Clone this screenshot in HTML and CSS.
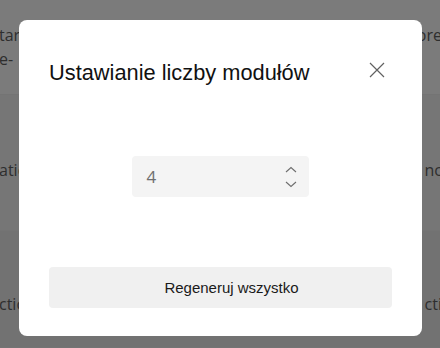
FILE: index.html
```
<!DOCTYPE html>
<html>
<head>
<meta charset="utf-8">
<link rel="stylesheet" href="styles.css">
</head>
<body>
<div class="page">
  <div class="row row-top">
    <div class="cell left"><div>tar</div><div>e-</div></div>
    <div class="cell right"><div>ore</div></div>
  </div>
  <div class="row row-mid">
    <div class="cell left">atio</div>
    <div class="cell right">nc</div>
  </div>
  <div class="row row-bot">
    <div class="cell left">ctio</div>
    <div class="cell right">cti</div>
  </div>
</div>
<div class="overlay">
  <div class="dialog">
    <div class="header">
      <h1 class="title">Ustawianie liczby modułów</h1>
      <button class="close" aria-label="Zamknij">
        <svg width="16" height="16" viewBox="0 0 16 16"><path d="M1 1 L15 15 M15 1 L1 15" stroke="#616161" stroke-width="1.2" fill="none"/></svg>
      </button>
    </div>
    <div class="body">
      <div class="spin">
        <span class="value">4</span>
        <div class="arrows">
          <svg width="12" height="8" viewBox="0 0 12 8"><path d="M1 6 L6 1.5 L11 6" stroke="#6e6e6e" stroke-width="1.1" fill="none"/></svg>
          <svg width="12" height="8" viewBox="0 0 12 8"><path d="M1 2 L6 6.5 L11 2" stroke="#6e6e6e" stroke-width="1.1" fill="none"/></svg>
        </div>
      </div>
    </div>
    <button class="regen">Regeneruj wszystko</button>
  </div>
</div>
</body>
</html>
```
FILE: styles.css
```
html, body {
  margin: 0;
  padding: 0;
}
body {
  width: 440px;
  height: 348px;
  overflow: hidden;
  position: relative;
  font-family: "Liberation Sans", Arial, sans-serif;
  background: #7a7a7a;
}
.page {
  display: flex;
  flex-direction: column;
  height: 348px;
}
.row {
  display: flex;
  justify-content: space-between;
  align-items: flex-start;
  color: #2e2e2e;
  font-family: "Open Sans", sans-serif;
  font-size: 16px;
  line-height: 22px;
  border-bottom: 1px solid #747474;
  box-sizing: border-box;
}
.row-top {
  height: 95px;
  padding-top: 24px;
  background: #7b7b7b;
}
.row-top .left div + div {
  margin-top: 2px;
}
.row-mid {
  height: 136px;
  padding-top: 64px;
  background: #767676;
}
.row-bot {
  flex: 1;
  padding-top: 62px;
  background: #727272;
}
.cell.left {
  margin-left: -1px;
}
.cell.right {
  margin-right: -2px;
}
.overlay {
  position: absolute;
  inset: 0;
  display: flex;
  align-items: flex-start;
  justify-content: center;
  padding-top: 20px;
}
.dialog {
  width: 403px;
  height: 316px;
  margin-left: 1px;
  background: #fff;
  border-radius: 8px;
  box-sizing: border-box;
  padding: 0 30px 28px 30px;
  display: flex;
  flex-direction: column;
}
.header {
  display: flex;
  justify-content: space-between;
  align-items: center;
  height: 64px;
  margin-top: 20px;
}
.title {
  margin: 0;
  font-size: 21.8px;
  font-weight: normal;
  color: #111;
  padding-top: 1px;
}
.close {
  border: 0;
  background: none;
  padding: 0;
  width: 16px;
  height: 16px;
  margin-right: 7px;
  margin-top: -4px;
  display: flex;
}
.body {
  flex: 1;
  display: flex;
  justify-content: center;
  align-items: center;
  padding-bottom: 18px;
}
.spin {
  width: 177px;
  height: 41px;
  background: #f4f4f4;
  border-radius: 4px;
  display: flex;
  align-items: center;
  justify-content: space-between;
  box-sizing: border-box;
  padding: 0 12px 0 15px;
  margin-left: -1px;
}
.value {
  font-family: "Open Sans", sans-serif;
  font-size: 17px;
  color: #6f6f6f;
}
.arrows {
  display: flex;
  flex-direction: column;
  gap: 6px;
}
.arrows svg {
  display: block;
}
.regen {
  height: 41px;
  border: 0;
  border-radius: 4px;
  background: #f0f0f0;
  font-family: "Liberation Sans", Arial, sans-serif;
  font-size: 15px;
  color: #1a1a1a;
  padding: 0 0 0 22px;
}
```
